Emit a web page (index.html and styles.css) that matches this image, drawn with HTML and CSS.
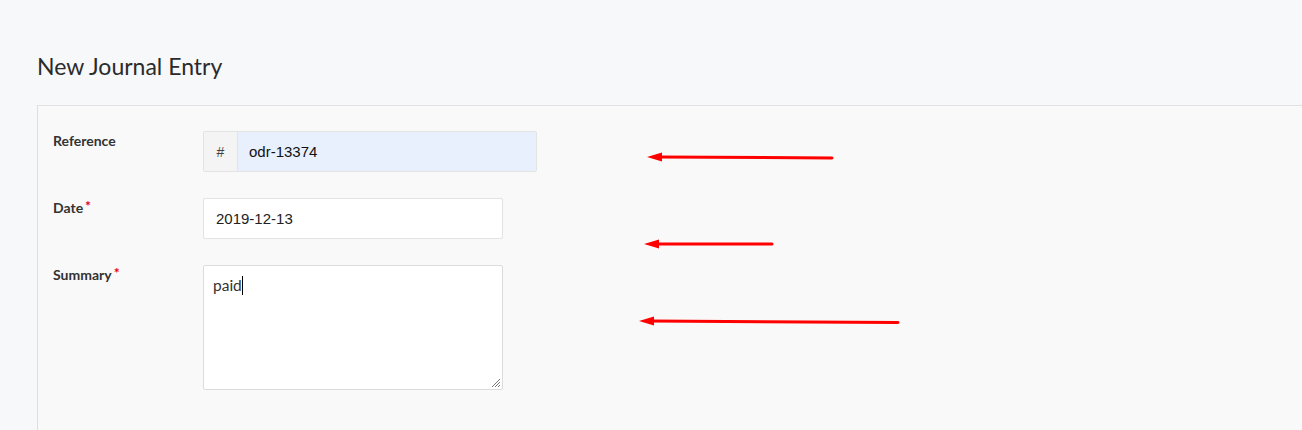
FILE: index.html
```html
<!DOCTYPE html>
<html>
<head>
<meta charset="utf-8">
<link rel="stylesheet" href="styles.css">
</head>
<body>
<div class="page">
  <h1 class="title">New Journal Entry</h1>
  <div class="card">
    <div class="row">
      <label class="label">Reference</label>
      <div class="group">
        <span class="addon">#</span>
        <span class="ref-input">odr-13374</span>
      </div>
    </div>
    <div class="row">
      <label class="label">Date<span class="req">*</span></label>
      <div class="input">2019-12-13</div>
    </div>
    <div class="row">
      <label class="label">Summary<span class="req">*</span></label>
      <div class="textarea"><span class="ta-text">paid</span><span class="caret"></span>
        <svg class="grip" width="10" height="10" viewBox="0 0 10 10"><path d="M1 9 L9 1 M4 9 L9 4 M7 9 L9 7" stroke="#777" stroke-width="1"/></svg>
      </div>
    </div>
  </div>
  <svg class="arrow a1" width="190" height="12" viewBox="0 0 190 12"><path d="M12 6 L185 7" stroke="#ff0000" stroke-width="3" stroke-linecap="round"/><path d="M0 6 L15 1.5 L15 10.5 Z" fill="#ff0000"/></svg>
  <svg class="arrow a2" width="132" height="12" viewBox="0 0 132 12"><path d="M12 6 L128 6" stroke="#ff0000" stroke-width="3" stroke-linecap="round"/><path d="M0 6 L15 1.5 L15 10.5 Z" fill="#ff0000"/></svg>
  <svg class="arrow a3" width="264" height="12" viewBox="0 0 264 12"><path d="M12 5 L259 6.5" stroke="#ff0000" stroke-width="3" stroke-linecap="round"/><path d="M0 5 L15 0.5 L15 9.5 Z" fill="#ff0000"/></svg>
</div>
</body>
</html>
```
FILE: styles.css
```css
html, body {
  margin: 0;
  padding: 0;
  background: #f7f8fa;
  font-family: Lato, "Open Sans", sans-serif;
  color: #333;
}
.page {
  position: relative;
  width: 1302px;
  height: 430px;
  overflow: hidden;
  padding-left: 37px;
  box-sizing: border-box;
}
.title {
  margin: 0;
  padding-top: 52px;
  height: 105px;
  box-sizing: border-box;
  font-size: 23px;
  font-weight: 400;
  line-height: 28px;
  color: #2b2b2b;
}
.card {
  background: #f9f9f9;
  border-top: 1px solid #e1e1e3;
  border-left: 1px solid #dedede;
  height: 330px;
  padding: 25px 0 0 15px;
  box-sizing: border-box;
  display: flex;
  flex-direction: column;
  gap: 26px;
}
.row {
  display: flex;
  align-items: flex-start;
}
.label {
  width: 150px;
  flex: none;
  font-size: 14px;
  font-weight: 700;
  color: #333;
  padding-top: 1px;
  line-height: 18px;
}
.req {
  color: #e8000f;
  margin-left: 2px;
  font-size: 14px;
  font-weight: 700;
  position: relative;
  top: -2px;
}
.group {
  display: flex;
  width: 334px;
  height: 41px;
  border: 1px solid #e3e3e3;
  border-radius: 2px;
  box-sizing: border-box;
  overflow: hidden;
}
.addon {
  width: 33px;
  flex: none;
  background: #f4f4f4;
  border-right: 1px solid #e3e3e3;
  display: flex;
  align-items: center;
  justify-content: center;
  font-family: "Liberation Sans", Arial, sans-serif;
  font-size: 14px;
  color: #444;
}
.ref-input {
  flex: 1;
  background: #e8f0fe;
  display: flex;
  align-items: center;
  padding-left: 11px;
  font-family: "Liberation Sans", Arial, sans-serif;
  font-size: 15px;
  color: #111;
}
.input {
  width: 300px;
  height: 41px;
  box-sizing: border-box;
  background: #fff;
  border: 1px solid #e3e3e3;
  border-radius: 2px;
  display: flex;
  align-items: center;
  padding-left: 12px;
  font-family: "Liberation Sans", Arial, sans-serif;
  font-size: 15px;
  color: #222;
}
.textarea {
  position: relative;
  width: 300px;
  height: 125px;
  box-sizing: border-box;
  background: #fff;
  border: 1px solid #dcdcdc;
  border-radius: 2px;
  padding: 9px 0 0 9px;
  font-size: 15.5px;
  line-height: 20px;
  color: #333;
  display: flex;
  align-items: flex-start;
}
.caret {
  display: inline-block;
  width: 1px;
  height: 19px;
  background: #000;
  margin-top: 1px;
}
.grip {
  position: absolute;
  right: 1px;
  bottom: 1px;
}
.arrow {
  position: absolute;
}
.a1 { left: 647px; top: 151px; }
.a2 { left: 644px; top: 238px; }
.a3 { left: 639px; top: 316px; }
```
